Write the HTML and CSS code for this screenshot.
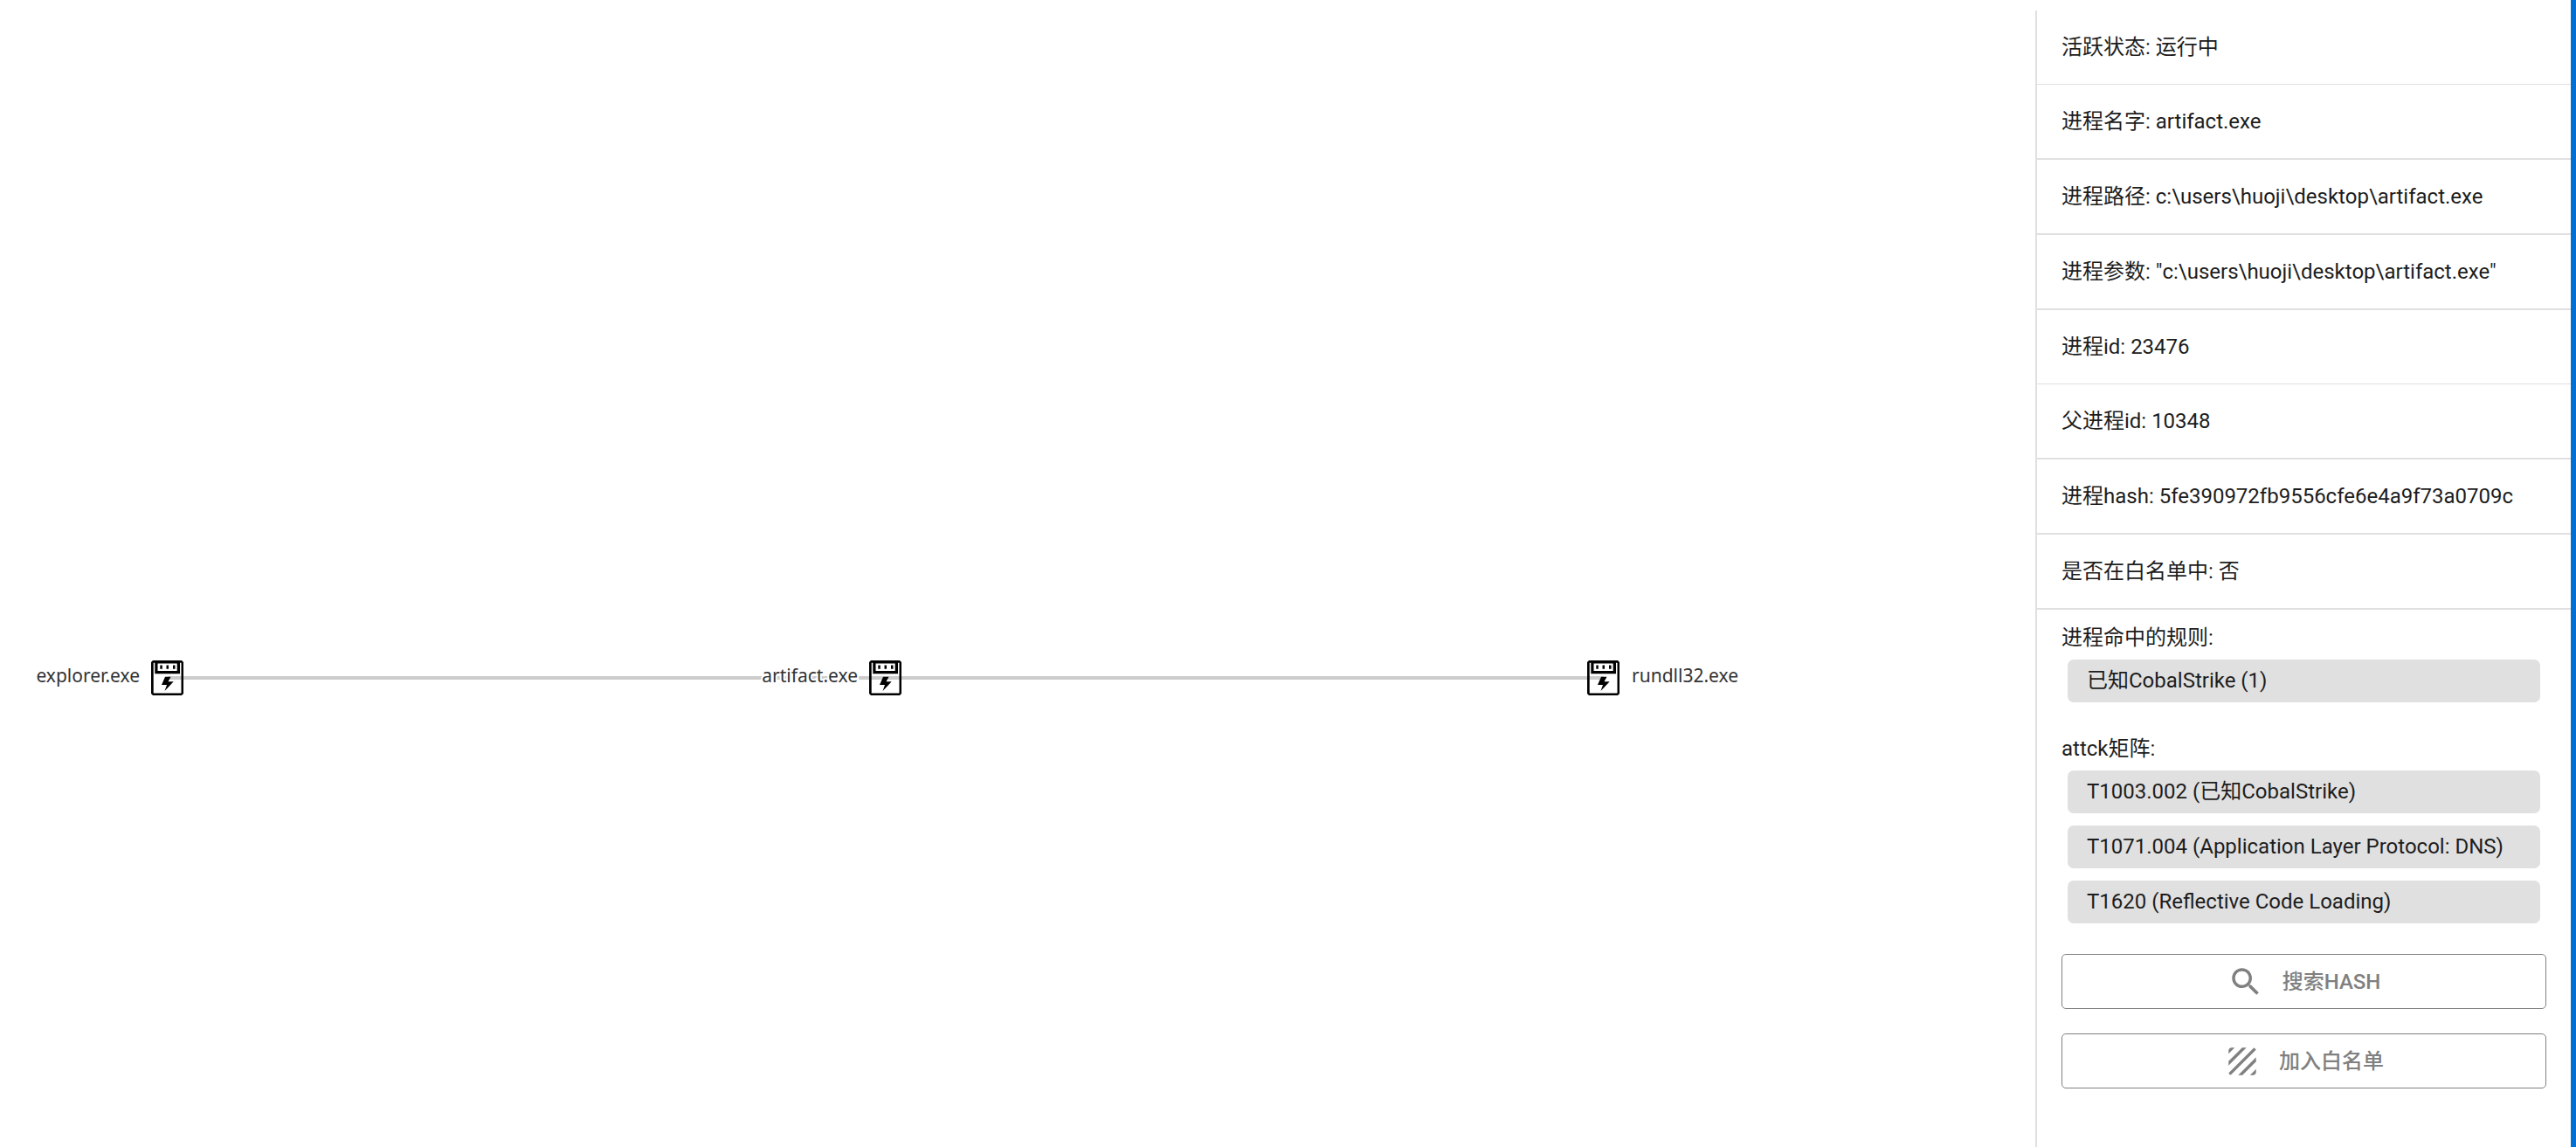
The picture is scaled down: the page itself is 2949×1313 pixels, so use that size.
FILE: index.html
```html
<!DOCTYPE html>
<html lang="zh-CN">
<head>
<meta charset="utf-8">
<meta name="viewport" content="width=device-width, initial-scale=1">
<title>进程链</title>
<link rel="stylesheet" href="styles.css">
</head>
<body>
<svg class="defs" aria-hidden="true">
  <symbol id="process" viewBox="0 0 37 40">
    <path fill-rule="evenodd" d="M2 0H35L37 2V38L35 40H2L0 38V2ZM2.700 2.700V37.500H34.500V2.700Z"/>
    <path fill-rule="evenodd" d="M4.300 0H33V15.300H4.300ZM7.500 3.500V12H29.700V3.500Z"/>
    <path d="M10.300 5.500h2.500v4.300h-2.500zM17.500 5.500h2.500v4.300h-2.500zM25 5.500h2.500v4.300h-2.500zM16 18.700H22.500L19.500 24.300H25.700L15.500 35L18 28H12Z"/>
  </symbol>
</svg>
<div class="layout">
  <main class="graph">
    <div class="chain">
      <div class="node"><span class="name">explorer.exe</span><svg class="icon"><use href="#process"/></svg></div>
      <div class="node"><span class="name">artifact.exe</span><svg class="icon"><use href="#process"/></svg></div>
      <div class="node leaf"><span class="name">rundll32.exe</span><svg class="icon"><use href="#process"/></svg></div>
    </div>
  </main>
  <aside class="details">
    <ul class="facts">
      <li>活跃状态: 运行中</li>
      <li>进程名字: artifact.exe</li>
      <li>进程路径: c:\users\huoji\desktop\artifact.exe</li>
      <li>进程参数: "c:\users\huoji\desktop\artifact.exe"</li>
      <li>进程id: 23476</li>
      <li>父进程id: 10348</li>
      <li>进程hash: 5fe390972fb9556cfe6e4a9f73a0709c</li>
      <li>是否在白名单中: 否</li>
    </ul>
    <section class="group">
      <h2>进程命中的规则:</h2>
      <ul class="chips">
        <li>已知CobalStrike (1)</li>
      </ul>
    </section>
    <section class="group">
      <h2>attck矩阵:</h2>
      <ul class="chips">
        <li>T1003.002 (已知CobalStrike)</li>
        <li>T1071.004 (Application Layer Protocol: DNS)</li>
        <li>T1620 (Reflective Code Loading)</li>
      </ul>
    </section>
    <div class="actions">
      <button type="button">
        <svg viewBox="0 0 24 24" aria-hidden="true"><path d="M15.5 14h-.79l-.28-.27C15.41 12.59 16 11.11 16 9.5 16 5.91 13.09 3 9.5 3S3 5.91 3 9.5 5.91 16 9.5 16c1.61 0 3.09-.59 4.23-1.57l.27.28v.79l5 4.99L20.49 19l-4.99-5zm-6 0C7.01 14 5 11.99 5 9.5S7.01 5 9.5 5 14 7.01 14 9.5 11.99 14 9.5 14z"/></svg>
        <span>搜索HASH</span>
      </button>
      <button type="button">
        <svg viewBox="0 0 24 24" aria-hidden="true"><path d="M19.51 3.08L3.08 19.51c.09.34.27.65.51.9.25.24.56.42.9.51L20.93 4.49c-.19-.69-.73-1.23-1.42-1.41zM11.88 3L3 11.88v2.83L14.71 3h-2.83zM5 3c-1.1 0-2 .9-2 2v2l4-4H5zm14 18c.55 0 1.05-.22 1.41-.59.37-.36.59-.86.59-1.41v-2l-4 4h2zm-9.71 0h2.83L21 12.12V9.29L9.29 21z"/></svg>
        <span>加入白名单</span>
      </button>
    </div>
  </aside>
</div>
</body>
</html>
```
FILE: styles.css
```css
* { box-sizing: border-box; }

body {
  margin: 0;
  background: #fff;
  color: #1d1d1d;
  font-family: Roboto, "Noto Sans CJK SC", sans-serif;
  font-size: 24px;
  line-height: 36px;
}

ul { list-style: none; margin: 0; padding: 0; }

.defs { display: none; }

.layout {
  display: flex;
  min-height: 100vh;
  padding-top: 12px;
  position: relative;
}

/* accent strip down the right edge of the window */
.layout::after {
  content: "";
  position: absolute;
  inset: 0 0 0 auto;
  width: 6px;
  background: #0070d6;
}

/* process chain */
.graph {
  flex: 1;
  min-width: 0;
  display: flex;
  align-items: center;
  padding: 226px 494px 0 192px;
}

.chain {
  flex: 1;
  display: flex;
  justify-content: space-between;
  height: 4px;
  background: #ccc;
}

.node {
  position: relative;
  width: 0;
  color: #333;
  font: 21px/28px "Noto Sans", "Noto Sans CJK SC", sans-serif;
}

.icon {
  position: absolute;
  left: -19px;
  top: -18px;
  width: 37px;
  height: 40px;
}

.name {
  position: absolute;
  right: 32px;
  top: -15px;
  -webkit-text-stroke: 4px #fff;
  paint-order: stroke fill;
}

.leaf .name { right: auto; left: 32px; }

/* details panel */
.details {
  flex: none;
  width: 619px;
  padding-right: 6px;
  border-left: 2px solid #e0e0e0;
}

.facts li {
  display: flex;
  align-items: center;
  height: 86px;
  padding: 0 28px;
  border-bottom: 2px solid #e0e0e0;
}

.facts li:nth-child(4n+1) {
  height: 85px;
  border-bottom-width: 1px;
}

.group { padding: 14px 28px; }

.group h2 {
  margin: 0;
  font-size: inherit;
  font-weight: 400;
}

.chips {
  display: grid;
  gap: 14px;
  padding: 7px;
}

.chips li {
  height: 49px;
  padding: 0 22px;
  border-radius: 7px;
  background: #e0e0e0;
  line-height: 49px;
}

.actions {
  display: grid;
  gap: 28px;
  padding: 14px 28px;
}

.actions button {
  display: flex;
  align-items: center;
  justify-content: center;
  gap: 21px;
  height: 63px;
  padding: 0 28px;
  border: 1px solid #808080;
  border-radius: 5px;
  background: none;
  color: #808080;
  font: inherit;
  font-weight: 500;
}

.actions svg {
  width: 42px;
  height: 42px;
  fill: currentColor;
}
```
